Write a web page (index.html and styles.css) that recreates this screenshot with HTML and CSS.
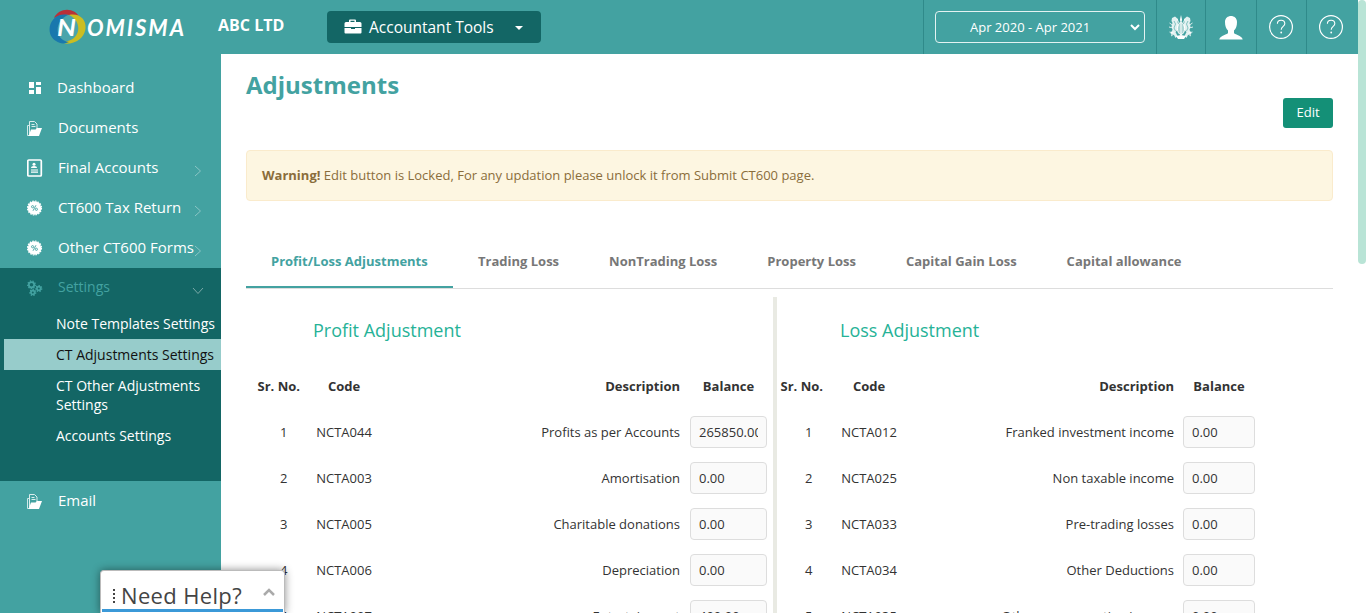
FILE: index.html
```html
<!DOCTYPE html>
<html lang="en">
<head>
<meta charset="utf-8">
<title>Adjustments</title>
<link rel="stylesheet" href="styles.css">
</head>
<body>
<svg class="defs" width="0" height="0">
  <symbol id="folder" viewBox="0 0 16 17"><path d="M2.500 15.500H.5V5.500h2" fill="none" stroke="#cfe8e8"/><path d="M2.500 14V1.500h5l2.500 2.500V9M4.500 4.500h3M4.500 6.500h4" fill="none" stroke="#d9eded"/><path d="M4 9.500H8.500L10 8H15l-3 8H1.500z" fill="#fff"/></symbol>
  <symbol id="percent" viewBox="0 0 16 16"><circle cx="7.500" cy="8" r="6.800" fill="#fff"/><circle cx="7.500" cy="8" r="7" fill="none" stroke="#fff" stroke-width="1.200" stroke-dasharray="1.600 1.170"/><g fill="none" stroke="#43a2a1" stroke-width=".9"><circle cx="5.600" cy="6.700" r="1.100"/><circle cx="9.400" cy="9.300" r="1.100"/><path d="M9 5.200l-3 5.600"/></g></symbol>
  <symbol id="help" viewBox="0 0 24 24"><circle cx="12" cy="12" r="11.400" fill="none" stroke="#fff" stroke-width="1.200"/><path d="M8.400 8.700c0-4.600 7.400-4.600 7.400 0 0 2.600-3.600 2.700-3.600 6" fill="none" stroke="#fff" stroke-width="1.100"/><circle cx="12.200" cy="17.500" r=".9" fill="#fff"/></symbol>
  <symbol id="chev" viewBox="0 0 8 12"><path d="M1 1l5.500 5L1 11" fill="none" stroke="#8bc5c5"/></symbol>
</svg>
<div class="app">
  <header class="header">
    <svg class="logo" width="138" height="36" viewBox="0 0 138 36">
      <circle cx="18" cy="19" r="13" fill="#4aa5ab"/>
      <path d="M5 9C10-2 26-2 31 9 24 4.500 12 4.500 5 9z" fill="#b93038"/>
      <path d="M20 6C41 2 43 31 21 34.500c-4 .5-7-.5-9-1.500C33 33 34 12 20 6z" fill="#cbbd22"/>
      <path d="M19 6C2 2-6 24 7 32c4 3 9 3 13 1C5 31 5 12 19 6z" fill="#1978ad"/>
      <text x="8" y="27" class="logo-n" textLength="19" lengthAdjust="spacingAndGlyphs">N</text>
      <text x="38" y="26.500" class="logo-text" textLength="97">OMISMA</text>
    </svg>
    <div class="company">ABC LTD</div>
    <button class="tools">
      <svg width="18" height="16" viewBox="0 0 18 16"><path d="M5 3V1.500Q5 .5 6 .5h5q1 0 1 1V3h4q1.500 0 1.500 1.500V8H.5V4.500Q.5 3 2 3zm1.500 0h4V1.800h-4zM.5 9H7v1h4V9h6.500v4.500q0 1-1 1h-15q-1 0-1-1z" fill="#fff"/></svg>
      <span class="tools-label">Accountant Tools</span><i class="caret"></i>
    </button>
    <div class="period"><div class="select"><span>Apr 2020 - Apr 2021</span><svg width="10" height="7" viewBox="0 0 10 7"><path d="M1 1l4 4 4-4" fill="none" stroke="#fff" stroke-width="2"/></svg></div></div>
    <div class="tool crest"><svg width="24" height="25" viewBox="0 0 24 25"><g fill="#fff"><path d="M11 5l.3-2L12 0l.7 3 .3 2-.5 2h-1z"/><ellipse cx="12" cy="13.500" rx="3.600" ry="6" fill="#fff" opacity=".55"/><ellipse cx="12" cy="13.500" rx="3.600" ry="6" fill="none" stroke="#fff"/><path d="M11.500 8h1v12h-1z"/><path d="M3 3l3-1.500L9 4l-.5 3 1 3-1 5-2 2 2 4-2 2-2-4-2 1-1-2 2-3-1-4 1-3-1-2z" opacity=".85"/><path d="M21 3l-3-1.500L15 4l.5 3-1 3 1 5 2 2-2 4 2 2 2-4 2 1 1-2-2-3 1-4-1-3 1-2z" opacity=".85"/><path d="M7 21l5-1 5 1-2 3H9z"/></g><path d="M.5 8l3 2M0 12l4 1M.5 17l4 1M2 21l3-2M23.500 8l-3 2M24 12l-4 1M23.500 17l-4 1M22 21l-3-2M8 4l2 4M16 4l-2 4" stroke="#fff" stroke-width=".8"/><path d="M5 6l1.500 3L5 13l1.500 3M19 6l-1.500 3 1.500 4-1.500 3" fill="none" stroke="#43a2a1" stroke-width=".6"/></svg></div>
    <div class="tool user"><svg width="24" height="25" viewBox="0 0 24 25"><path d="M6 7C6-1 18-1 18 7c0 4-1 6.500-3 8.500V18c0 1 8 2.500 8.700 6.500H.3C1 20.500 9 19 9 18v-2.500C7 13.500 6 11 6 7z" fill="#fff"/></svg></div>
    <div class="tool q1"><svg width="24" height="24"><use href="#help"/></svg></div>
    <div class="tool q2"><svg width="24" height="24"><use href="#help"/></svg></div>
  </header>
  <div class="body">
    <nav class="sidebar">
      <a class="item first"><svg width="16" height="16" viewBox="0 0 16 16"><path d="M2 2h5v6H2zM9 2h5v3H9zM2 10h5v4H2zM9 7h5v7H9z" fill="#fff"/></svg><span>Dashboard</span></a>
      <a class="item"><svg width="16" height="17"><use href="#folder"/></svg><span>Documents</span></a>
      <a class="item"><svg width="16" height="18" viewBox="0 0 16 18"><rect x=".8" y="1" width="13.500" height="16" rx="1" fill="none" stroke="#fff" stroke-width="1.700"/><circle cx="7" cy="5.300" r="1.500" fill="#fff"/><path d="M4 9q0-2 3-2t3 2zM4 10.500h7v1H4zM4 12.500h7v1.200H4z" fill="#fff"/></svg><span>Final Accounts</span><svg class="chev" width="8" height="12"><use href="#chev"/></svg></a>
      <a class="item"><svg width="16" height="16"><use href="#percent"/></svg><span>CT600 Tax Return</span><svg class="chev" width="8" height="12"><use href="#chev"/></svg></a>
      <a class="item"><svg width="16" height="16"><use href="#percent"/></svg><span>Other CT600 Forms</span><svg class="chev" width="8" height="12"><use href="#chev"/></svg></a>
      <div class="group">
        <a class="item open"><svg width="16" height="16" viewBox="0 0 16 16"><g fill="none" stroke="#43a2a1"><g stroke-width="1.800"><circle cx="4.500" cy="4.800" r="2.700"/><circle cx="11.800" cy="8.500" r="1.900"/><circle cx="5.800" cy="12.500" r="1.900"/></g><g stroke-width="1.200" stroke-dasharray="1.300 1.400"><circle cx="4.500" cy="4.800" r="3.900"/><circle cx="11.800" cy="8.500" r="3"/><circle cx="5.800" cy="12.500" r="3"/></g></g></svg><span>Settings</span><svg class="chev" width="12" height="8" viewBox="0 0 12 8"><path d="M1 1l5 5.500L11 1" fill="none" stroke="#7aa9a8"/></svg></a>
        <a class="sub">Note Templates Settings</a>
        <a class="sub current">CT Adjustments Settings</a>
        <a class="sub">CT Other Adjustments Settings</a>
        <a class="sub">Accounts Settings</a>
      </div>
      <a class="item"><svg width="16" height="17"><use href="#folder"/></svg><span>Email</span></a>
    </nav>
    <main class="main">
      <div class="top"><h1>Adjustments</h1><button class="edit">Edit</button></div>
      <div class="alert"><b>Warning!</b> Edit button is Locked, For any updation please unlock it from Submit CT600 page.</div>
      <div class="tabs"><a class="active">Profit/Loss Adjustments</a><a>Trading Loss</a><a>NonTrading Loss</a><a>Property Loss</a><a>Capital Gain Loss</a><a>Capital allowance</a></div>
      <div class="panels">
        <section class="profit">
          <h2>Profit Adjustment</h2>
          <div class="row head"><span>Sr. No.</span><span>Code</span><span>Description</span><span>Balance</span></div>
          <div class="row"><span>1</span><span>NCTA044</span><span>Profits as per Accounts</span><div class="field"><div>265850.00</div></div></div>
          <div class="row"><span>2</span><span>NCTA003</span><span>Amortisation</span><div class="field"><div>0.00</div></div></div>
          <div class="row"><span>3</span><span>NCTA005</span><span>Charitable donations</span><div class="field"><div>0.00</div></div></div>
          <div class="row"><span>4</span><span>NCTA006</span><span>Depreciation</span><div class="field"><div>0.00</div></div></div>
          <div class="row"><span>5</span><span>NCTA007</span><span>Entertainment</span><div class="field"><div>400.00</div></div></div>
        </section>
        <section class="loss">
          <h2>Loss Adjustment</h2>
          <div class="row head"><span>Sr. No.</span><span>Code</span><span>Description</span><span>Balance</span></div>
          <div class="row"><span>1</span><span>NCTA012</span><span>Franked investment income</span><div class="field"><div>0.00</div></div></div>
          <div class="row"><span>2</span><span>NCTA025</span><span>Non taxable income</span><div class="field"><div>0.00</div></div></div>
          <div class="row"><span>3</span><span>NCTA033</span><span>Pre-trading losses</span><div class="field"><div>0.00</div></div></div>
          <div class="row"><span>4</span><span>NCTA034</span><span>Other Deductions</span><div class="field"><div>0.00</div></div></div>
          <div class="row"><span>5</span><span>NCTA035</span><span>Other non operating income</span><div class="field"><div>0.00</div></div></div>
        </section>
      </div>
    </main>
  </div>
</div>
<div class="scroll"></div>
<div class="help"><div class="help-in"><svg width="4" height="17" viewBox="0 0 4 17"><path d="M1 1h2v2H1zM1 5h2v2H1zM1 9h2v2H1zM1 13h2v2H1z" fill="#444"/></svg><span>Need Help?</span><svg class="up" width="12" height="9" viewBox="0 0 12 9"><path d="M1 7l5-5 5 5" fill="none" stroke="#aaa" stroke-width="2.500"/></svg></div></div>
</body>
</html>
```
FILE: styles.css
```css
* { box-sizing: border-box; }
body { margin: 0; height: 613px; overflow: hidden; position: relative; background: #fff; font-family: "Open Sans", sans-serif; font-size: 13px; color: #333; }
button { font: inherit; border: 0; }
.defs { position: absolute; }
.app { width: 1358px; height: 613px; overflow: hidden; display: flex; flex-direction: column; }
.header { height: 54px; flex: none; background: #43a2a1; display: flex; color: #fff; }
.logo { margin: 9px 0 0 49px; flex: none; }
.logo-n { font: italic 700 23px Lato, sans-serif; fill: #fff; }
.logo-text { font: italic 700 22px Lato, sans-serif; fill: #fff; }
.company { margin-left: 31px; width: 109px; flex: none; font-size: 16px; font-weight: 700; line-height: 22px; padding-top: 14px; white-space: nowrap; }
.tools { width: 214px; height: 32px; margin-top: 11px; padding: 0 17px; border-radius: 4px; background: #136665; color: #fff; display: flex; align-items: center; font-size: 15.500px; }
.tools-label { margin-left: 7px; white-space: nowrap; }
.caret { margin: 1px 1px 0 auto; border: 4.500px solid transparent; border-top-color: #fff; border-bottom: 0; }
.period { width: 233px; margin-left: auto; padding: 11px 11px; border-left: 1px solid #2f8a8a; }
.select { width: 210px; height: 32px; border: 1px solid #e4f2f2; border-radius: 4px; display: flex; align-items: center; justify-content: space-between; padding: 0 4px 0 34px; font-size: 13px; }
.tool { width: 50px; border-left: 1px solid #2f8a8a; display: flex; justify-content: center; }
.tool svg { margin-top: 15px; }
.crest { width: 49px; }
.user { width: 51px; }
.q1 { padding-right: 2px; }
.q2 { width: 52px; padding-right: 4px; }
.body { flex: 1; display: flex; min-height: 0; }
.sidebar { width: 221px; flex: none; background: #43a2a1; padding-top: 14px; font-size: 15px; color: #fff; }
.item { height: 40px; display: flex; align-items: center; padding: 0 19px 0 27px; white-space: nowrap; }
.item span { margin-left: 15px; flex: 1; line-height: 20px; margin-top: -3px; width: 0; }
.first span { margin-left: 14px; }
.chev { margin-top: 6px; }
.group { height: 213px; background: #136665; }
.open { color: #43a2a1; padding-right: 17px; font-size: 14px; }
.sub { display: block; margin-left: 4px; padding: 6px 0 6px 52px; font-size: 14px; line-height: 19px; }
.current { background: #97cccb; color: #111; }
.main { flex: 1; padding: 0 25px; }
.top { display: flex; justify-content: space-between; height: 96px; }
h1 { margin: 14px 0 0; font-size: 24px; line-height: 34px; color: #43a2a1; }
.edit { width: 50px; height: 30px; margin-top: 44px; padding: 0 0 2px; border-radius: 3px; background: #149077; color: #fff; }
.alert { height: 51px; border: 1px solid #faebcc; border-radius: 4px; background: #fdf6e1; color: #8a6d3b; padding: 15px; line-height: 19px; }
.tabs { height: 88px; border-bottom: 1px solid #ddd; display: flex; padding-top: 35px; font-weight: 700; color: #777; }
.tabs a { padding: 15px 25px 0; height: 52px; line-height: 20px; white-space: nowrap; }
.tabs .active { color: #43a2a1; border-bottom: 2px solid #43a2a1; width: 207px; }
.panels { display: flex; padding-top: 8px; }
.profit { width: 531px; border-right: 4px solid #e9eae3; height: 330px; }
.loss { width: 480px; }
h2 { margin: 19px 0 0 67px; font-size: 18px; font-weight: 400; line-height: 28px; color: #26b297; }
.loss h2 { margin-left: 63px; }
.row { height: 46px; display: grid; align-items: center; line-height: 18px; }
.profit .row { grid-template-columns: 65px 66px 303px 10px 77px; }
.loss .row { grid-template-columns: 49px 86px 262px 9px 72px; }
.row span:nth-child(1) { text-align: right; padding-right: 23.500px; }
.loss .row span:nth-child(1) { padding-right: 13.500px; }
.row span:nth-child(2) { text-align: center; }
.row span:nth-child(3) { text-align: right; }
.row > :nth-child(4) { grid-column: 5; }
.row.head { margin-top: 19px; font-weight: 700; text-align: center; }
.row.head span:nth-child(1) { padding: 0 0 0 11.500px; white-space: nowrap; text-align: left; }
.loss .row.head span:nth-child(1) { padding: 0 0 0 3.500px; }
.field { height: 32px; border: 1px solid #ddd; border-radius: 4px; background: #fafafa; padding: 6px 8px; }
.field div { overflow: hidden; height: 20px; line-height: 19px; }
.scroll { position: absolute; right: 0; top: 0; width: 8px; height: 264px; border-radius: 4px; background: #b9e4d6; }
.help { position: absolute; left: 100px; top: 570px; width: 185px; height: 43px; background: #fff; border: 1px solid #bbb; border-bottom: 0; border-radius: 4px 4px 0 0; padding: 0 1px; box-shadow: 0 0 8px rgba(0,0,0,.45); color: #444; }
.help-in { height: 41px; border-bottom: 3px solid #3b99d8; display: flex; padding: 9px 8px 0 10px; overflow: hidden; }
.help-in > svg { flex: none; margin-top: 8px; }
.help-in span { font-size: 22px; font-weight: 500; line-height: 30px; margin-left: 5px; flex: 1; white-space: nowrap; letter-spacing: .35px; }
.help-in .up { margin-top: 8px; }
```
